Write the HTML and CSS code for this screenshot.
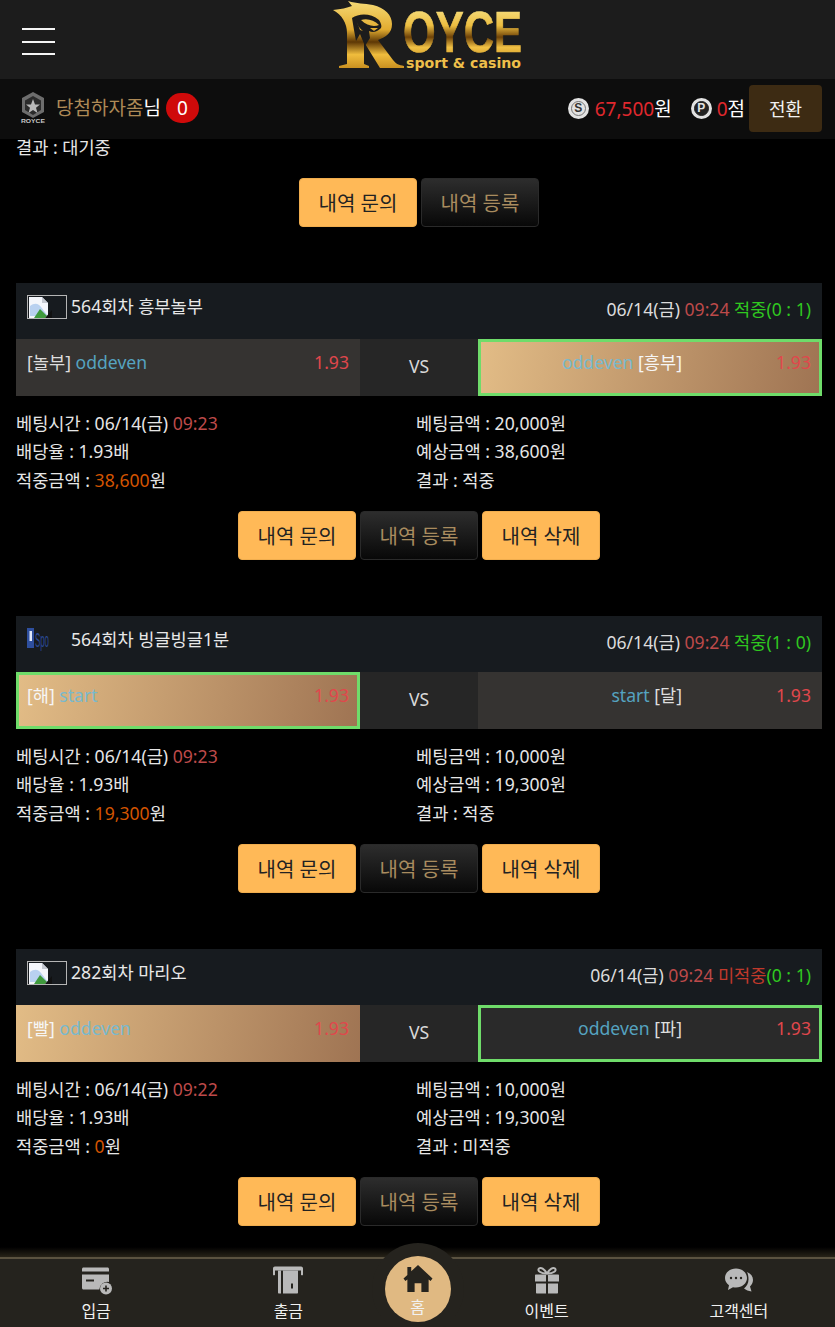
FILE: index.html
```html
<!DOCTYPE html>
<html lang="ko">
<head>
<meta charset="utf-8">
<title>ROYCE</title>
<link rel="stylesheet" href="styles.css">
</head>
<body>
<header class="top">
  <div class="brand">
    <button class="burger" aria-label="메뉴"><span></span><span></span><span></span></button>
    <svg class="logo" width="192" height="72" viewBox="0 0 192 72">
      <defs>
        <linearGradient id="gold" x1="0" y1="0" x2="0" y2="1">
          <stop offset="0" stop-color="#fbee9c"/>
          <stop offset=".4" stop-color="#ecbd40"/>
          <stop offset=".58" stop-color="#6e4207"/>
          <stop offset=".74" stop-color="#f0c044"/>
          <stop offset="1" stop-color="#c08a20"/>
        </linearGradient>
        <linearGradient id="goldR" gradientUnits="userSpaceOnUse" x1="0" y1="0" x2="0" y2="70">
          <stop offset="0" stop-color="#f6dc78"/>
          <stop offset=".42" stop-color="#e2ac30"/>
          <stop offset=".6" stop-color="#5d3705"/>
          <stop offset=".78" stop-color="#f0bd3d"/>
          <stop offset="1" stop-color="#c48a1c"/>
        </linearGradient>
      </defs>
      <path fill="url(#goldR)" d="M0 10C8 9 14 8 19 6L15 1C24 4 31 3 40 5C52 8 59 15 59 24C59 33 53 37 45 40L60 60C63 64 66 65 71 66V68H47L31 42V64L36 66V68H6V66L14 64V33C14 23 9 15 0 10Z"/>
      <path fill="#1c1c1c" d="M19 18C26 13 38 13 46 20C48 23 49 26 48 28C44 32 40 33 36 31L37 38L32 46L27 34L23 41L21 30Z"/>
      <path fill="url(#goldR)" d="M28 20C34 18 41 20 46 25C41 27 34 26 28 20ZM37 28L45 28L41 31ZM24 22C25 26 27 29 30 31L27 30Z"/>
      <text x="70" y="52" class="logo-big" fill="url(#gold)" stroke="url(#gold)" stroke-width=".7" textLength="119" lengthAdjust="spacingAndGlyphs">OYCE</text>
      <text x="73" y="68" class="logo-small" fill="#eebf4a" textLength="115" lengthAdjust="spacingAndGlyphs">sport &amp; casino</text>
    </svg>
  </div>
  <div class="userbar">
    <div class="user">
      <svg class="rank" width="26" height="32" viewBox="0 0 26 32">
        <path d="M13 0L24 6V20L13 26L2 20V6Z" fill="#6d6d6d"/>
        <path d="M13 4L21 8.500V18L13 23L5 18V8.500Z" fill="#2b2b2b"/>
        <path d="M13 7L15 12.500H20L16 15.800L17.500 21L13 18L8.500 21L10 15.800L6 12.500H11Z" fill="#b9b9b9"/>
        <text x="13" y="31" class="rank-text" text-anchor="middle" fill="#c8c8c8" textLength="24" lengthAdjust="spacingAndGlyphs">ROYCE</text>
      </svg>
      <span class="name">당첨하자좀<b>님</b></span>
      <span class="msg">0</span>
    </div>
    <div class="wallet">
      <span class="coin"><span class="coin-in">S</span></span><span class="money"><em>67,500</em>원</span>
      <span class="coin coin-p"><span class="coin-in">P</span></span><span class="money"><em>0</em>점</span>
      <button class="swap">전환</button>
    </div>
  </div>
</header>

<main class="list">
  <div class="detail-line first-line">결과 : 대기중</div>
  <div class="actions lead">
    <button class="btn gold">내역 문의</button>
    <button class="btn dark">내역 등록</button>
  </div>

  <section class="bet">
    <div class="bet-head">
      <div class="title">
        <span class="thumb broken">
          <svg width="24" height="22" viewBox="0 0 24 22"><path d="M1 1H14L20 7V22H1Z" fill="#f4f6fb"/><path d="M14 1V7H20Z" fill="#c5c9d1"/><path d="M2 20L2 10C7 6 11 8 13 11L20 20Z" fill="#b9d1f0"/><path d="M6 22L12 13L19 20L17 22Z" fill="#3f9a3d"/><path d="M17 22L24 14V22Z" fill="#111"/></svg>
        </span>
        <span>564회차 흥부놀부</span>
      </div>
      <div class="when">06/14(금) <i class="red">09:24</i> <i class="win">적중(0 : 1)</i></div>
    </div>
    <div class="match">
      <div class="side"><span class="pick"><span class="tag">[놀부]</span> <span class="type">oddeven</span></span><span class="odds">1.93</span></div>
      <div class="vs">VS</div>
      <div class="side on"><span class="pick center"><span class="type">oddeven</span> <span class="tag">[흥부]</span></span><span class="odds">1.93</span></div>
    </div>
    <div class="details">
      <div>
        <div class="detail-line">베팅시간 : 06/14(금) <i class="red">09:23</i></div>
        <div class="detail-line">배당율 : 1.93배</div>
        <div class="detail-line">적중금액 : <i class="orange">38,600</i>원</div>
      </div>
      <div>
        <div class="detail-line">베팅금액 : 20,000원</div>
        <div class="detail-line">예상금액 : 38,600원</div>
        <div class="detail-line">결과 : 적중</div>
      </div>
    </div>
    <div class="actions">
      <button class="btn gold">내역 문의</button>
      <button class="btn dark">내역 등록</button>
      <button class="btn gold">내역 삭제</button>
    </div>
  </section>

  <section class="bet">
    <div class="bet-head">
      <div class="title">
        <span class="thumb spo">
          <svg width="40" height="24" viewBox="0 0 40 24"><rect x="0" y="0" width="7" height="20" fill="#2e4f9e"/><rect x="2.500" y="3" width="2.500" height="10" fill="#dfe7f7"/><text x="8" y="19" class="spo-text" fill="#2a4a96" textLength="14" lengthAdjust="spacingAndGlyphs">Spo</text></svg>
        </span>
        <span>564회차 빙글빙글1분</span>
      </div>
      <div class="when">06/14(금) <i class="red">09:24</i> <i class="win">적중(1 : 0)</i></div>
    </div>
    <div class="match">
      <div class="side on"><span class="pick"><span class="tag">[해]</span> <span class="type">start</span></span><span class="odds">1.93</span></div>
      <div class="vs">VS</div>
      <div class="side"><span class="pick center"><span class="type">start</span> <span class="tag">[달]</span></span><span class="odds">1.93</span></div>
    </div>
    <div class="details">
      <div>
        <div class="detail-line">베팅시간 : 06/14(금) <i class="red">09:23</i></div>
        <div class="detail-line">배당율 : 1.93배</div>
        <div class="detail-line">적중금액 : <i class="orange">19,300</i>원</div>
      </div>
      <div>
        <div class="detail-line">베팅금액 : 10,000원</div>
        <div class="detail-line">예상금액 : 19,300원</div>
        <div class="detail-line">결과 : 적중</div>
      </div>
    </div>
    <div class="actions">
      <button class="btn gold">내역 문의</button>
      <button class="btn dark">내역 등록</button>
      <button class="btn gold">내역 삭제</button>
    </div>
  </section>

  <section class="bet">
    <div class="bet-head">
      <div class="title">
        <span class="thumb broken">
          <svg width="24" height="22" viewBox="0 0 24 22"><path d="M1 1H14L20 7V22H1Z" fill="#f4f6fb"/><path d="M14 1V7H20Z" fill="#c5c9d1"/><path d="M2 20L2 10C7 6 11 8 13 11L20 20Z" fill="#b9d1f0"/><path d="M6 22L12 13L19 20L17 22Z" fill="#3f9a3d"/><path d="M17 22L24 14V22Z" fill="#111"/></svg>
        </span>
        <span>282회차 마리오</span>
      </div>
      <div class="when">06/14(금) <i class="red">09:24</i> <i class="lose">미적중</i><i class="win">(0 : 1)</i></div>
    </div>
    <div class="match">
      <div class="side on plain"><span class="pick"><span class="tag">[빨]</span> <span class="type">oddeven</span></span><span class="odds">1.93</span></div>
      <div class="vs">VS</div>
      <div class="side ring"><span class="pick center"><span class="type">oddeven</span> <span class="tag">[파]</span></span><span class="odds">1.93</span></div>
    </div>
    <div class="details">
      <div>
        <div class="detail-line">베팅시간 : 06/14(금) <i class="red">09:22</i></div>
        <div class="detail-line">배당율 : 1.93배</div>
        <div class="detail-line">적중금액 : <i class="orange">0</i>원</div>
      </div>
      <div>
        <div class="detail-line">베팅금액 : 10,000원</div>
        <div class="detail-line">예상금액 : 19,300원</div>
        <div class="detail-line">결과 : 미적중</div>
      </div>
    </div>
    <div class="actions">
      <button class="btn gold">내역 문의</button>
      <button class="btn dark">내역 등록</button>
      <button class="btn gold">내역 삭제</button>
    </div>
  </section>
</main>

<nav class="tabbar">
  <a class="tab">
    <svg width="32" height="28" viewBox="0 0 32 28"><path fill="#b9b9b9" d="M2 2.500C2 1.700 2.700 1 3.500 1H27.500C28.300 1 29 1.700 29 2.500V5H2ZM2 8H29V15.500A8 8 0 0 0 19.300 23H3.500C2.700 23 2 22.300 2 21.500ZM6 13V15H14V13Z"/><circle cx="26" cy="22" r="6" fill="#b9b9b9"/><path d="M26 19V25M23 22H29" stroke="#25231e" stroke-width="1.600"/></svg>
    <span>입금</span>
  </a>
  <a class="tab">
    <svg width="32" height="28" viewBox="0 0 32 28"><path fill="#b9b9b9" d="M3 0H29C30.500 0 31 1 31 2V8C31 9 30 9 29 8.500V4H3V8.500C2 9 1 9 1 8V2C1 1 1.500 0 3 0Z"/><path fill="#b9b9b9" d="M6 4H9V27H7C6.400 27 6 26.600 6 26ZM11 4H26V26C26 26.600 25.600 27 25 27H11ZM19 17V22H21V17Z"/></svg>
    <span>출금</span>
  </a>
  <a class="tab home">
    <span class="home-disc">
      <svg width="32" height="30" viewBox="0 0 32 30"><path fill="#25231e" d="M16 1L31 15L29 17.500L27 16V29H19.500V20H12.500V29H5V16L3 17.500L1 15L5 11.300V3H9V7.600Z"/></svg>
      <span>홈</span>
    </span>
  </a>
  <a class="tab">
    <svg width="32" height="28" viewBox="0 0 32 28"><path fill="none" stroke="#b9b9b9" stroke-width="2" d="M16 7C13 2 10 0.500 8 2C6 4 9 7 16 7C23 7 26 4 24 2C22 0.500 19 2 16 7Z"/><path fill="#b9b9b9" d="M5 8H15V15H4V9C4 8.400 4.400 8 5 8ZM17 8H27C27.600 8 28 8.400 28 9V15H17ZM5 17H15V27H6C5.400 27 5 26.600 5 26ZM17 17H27V26C27 26.600 26.600 27 26 27H17Z"/></svg>
    <span>이벤트</span>
  </a>
  <a class="tab">
    <svg width="32" height="28" viewBox="0 0 32 28"><path fill="#b9b9b9" d="M24 5.500C28 7 30 10 30 13.500C30 16.500 28.500 18.500 27 20L28.500 25C25.500 24.500 23 23.500 21 22C23.500 20 25.500 17 25.500 13C25.500 10 25 7.500 24 5.500Z"/><path fill="#b9b9b9" d="M13 2C19 2 24 6 24 11.500C24 17 19 21 13 21C12 21 11 21 10 20.700L5 23.500L6 18.800C3.500 17 2 14.500 2 11.500C2 6 7 2 13 2Z"/><g fill="#25231e"><circle cx="8" cy="11.500" r="1.200"/><circle cx="13" cy="11.500" r="1.200"/><circle cx="18" cy="11.500" r="1.200"/></g></svg>
    <span>고객센터</span>
  </a>
</nav>
</body>
</html>
```

FILE: styles.css
```css
* { box-sizing: border-box; }
html, body { margin: 0; padding: 0; height: 100%; }
body {
  background: #000;
  color: #e6e6e6;
  font-family: "Noto Sans", "Noto Sans CJK KR", sans-serif;
  font-size: 17.6px;
  overflow: hidden;
}
i, em { font-style: normal; }
button { font-family: inherit; cursor: pointer; }

/* top */
.top { position: fixed; top: 0; left: 0; right: 0; z-index: 5; }
.brand {
  height: 79px;
  background: #1c1c1c;
  display: flex;
  align-items: flex-start;
}
.burger {
  background: none;
  border: 0;
  padding: 0;
  margin: 28px 0 0 22px;
  width: 33px;
  height: 27px;
  display: flex;
  flex-direction: column;
  justify-content: space-between;
}
.burger span { display: block; height: 2px; background: #f5f5f5; width: 100%; }
.logo { margin-left: 278px; }
.logo-big { font: 700 57px "Liberation Sans", sans-serif; }
.logo-small { font: 700 14px "DejaVu Sans", sans-serif; }
.rank-text { font: 700 6px "Liberation Sans", sans-serif; }
.spo-text { font: 400 20px "Liberation Sans", sans-serif; }

.userbar {
  height: 60px;
  background: #0d0d0d;
  display: flex;
  align-items: center;
  justify-content: space-between;
  padding: 0 13px 2px 20px;
}
.user { display: flex; align-items: center; }
.name { margin-left: 10px; font-size: 19px; color: #ae8a56; line-height: 30px; }
.name b { font-weight: 400; color: #fff; }
.msg {
  margin-left: 5px;
  width: 33px;
  height: 30px;
  border-radius: 15px;
  background: #cf0a0a;
  color: #fff;
  font-size: 19px;
  display: flex;
  align-items: center;
  justify-content: center;
}
.wallet { display: flex; align-items: center; }
.coin {
  width: 21px;
  height: 21px;
  border-radius: 50%;
  background: #e2e2e2;
  display: flex;
  align-items: center;
  justify-content: center;
  margin-right: 6px;
}
.coin-in {
  width: 15px;
  height: 15px;
  border-radius: 50%;
  border: 1px solid #777;
  color: #333;
  font: 700 12px/13px "Liberation Sans", sans-serif;
  text-align: center;
}
.coin-p { margin-left: 19px; margin-right: 5px; }
.coin-p .coin-in { background: #222; color: #e2e2e2; border-color: #222; }
.money { font-size: 19px; color: #fff; }
.money em { color: #e0282d; }
.swap {
  margin-left: 4px;
  width: 73px;
  height: 47px;
  background: #3d2b13;
  border: 0;
  border-radius: 4px;
  color: #f2f2f2;
  font-size: 18px;
}

/* list */
.list { height: 100vh; overflow: hidden; padding: 133px 13px 0 16px; }
.detail-line { line-height: 28.5px; height: 28.5px; white-space: nowrap; }
.first-line { margin-bottom: 16.500px; }
.red { color: #bd4a4a; }
.orange { color: #d35400; }
.win { color: #2fc81f; }
.lose { color: #c0392b; }

.actions { display: flex; justify-content: center; gap: 4px; }
.lead { margin-bottom: 56.330px; }
.btn {
  width: 118px;
  height: 48.670px;
  border-radius: 4px;
  font-size: 20px;
  padding: 0;
}
.gold { background: #ffb957; border: 1px solid #f0ad4e; color: #222; }
.dark {
  background: linear-gradient(#2d2d2d, #080808);
  border: 1px solid #2a2a2a;
  color: #a98c5f;
}
.bet { margin-bottom: 56.330px; }
.bet-head {
  height: 56px;
  background: #171b1f;
  display: flex;
  justify-content: space-between;
  padding: 0 11px;
}
.title { display: flex; align-items: flex-start; padding-top: 9px; line-height: 28px; color: #e8e8e8; }
.thumb { display: block; width: 40px; height: 24px; margin: 3px 4px 0 0; overflow: hidden; }
.broken { border: 1px solid #b5b5b5; }
.broken svg, .spo svg { display: block; }
.when { padding-top: 12px; line-height: 28px; color: #dcdcdc; white-space: nowrap; }
.match {
  display: grid;
  grid-template-columns: 344px 118px 344px;
  height: 56.600px;
  line-height: 26px;
}
.side {
  background: #353331;
  display: flex;
  justify-content: space-between;
  padding: 10px 11px 0;
}
.side.on {
  background: linear-gradient(100deg, #e2bc86, #9f7453);
  border: 3px solid #6fdc6a;
  padding: 7px 8px 0;
}
.side.plain { border: 0; padding: 10px 11px 0; }
.side.ring { border: 3px solid #6fdc6a; padding: 7px 8px 0; background: #2a2a2a; }
.pick.center { width: 193px; text-align: right; }
.tag { color: #dedede; }
.on .tag { color: #f6f6f6; }
.type { color: #55a3c0; }
.on .type { color: #78b9cd; }
.odds { color: #e0474c; }
.vs {
  background: #262626;
  color: #d8d8d8;
  text-align: center;
  line-height: 54px;
}
.details {
  display: grid;
  grid-template-columns: 400px 1fr;
  padding: 13px 0 16.900px;
}

/* tab bar */
.tabbar {
  position: fixed;
  left: 0;
  right: 0;
  bottom: 0;
  height: 70px;
  z-index: 6;
  display: grid;
  grid-template-columns: 1fr 1fr 66px 1fr 1fr;
  background: #25231e;
  border-top: 2px solid #5a5240;
}
.tabbar::before {
  content: "";
  position: absolute;
  left: 0;
  right: 0;
  top: -12px;
  height: 10px;
  background: linear-gradient(transparent, rgba(112, 100, 70, .35));
}
.tab {
  display: flex;
  flex-direction: column;
  align-items: center;
  padding-top: 7px;
  color: #f1f1f1;
  font-size: 16px;
  line-height: 22px;
}
.tab svg { display: block; height: 29px; margin-bottom: 5px; }
.home { position: relative; }
.home::before {
  content: "";
  position: absolute;
  left: -13px;
  top: -16px;
  width: 92px;
  height: 92px;
  border-radius: 50%;
  background: #25231e;
}
.home-disc {
  position: absolute;
  left: 0;
  top: -3px;
  width: 66px;
  height: 66px;
  border-radius: 50%;
  background: #e0b982;
  display: flex;
  flex-direction: column;
  align-items: center;
  padding-top: 8px;
}
.home-disc svg { margin-bottom: 3px; }
```
